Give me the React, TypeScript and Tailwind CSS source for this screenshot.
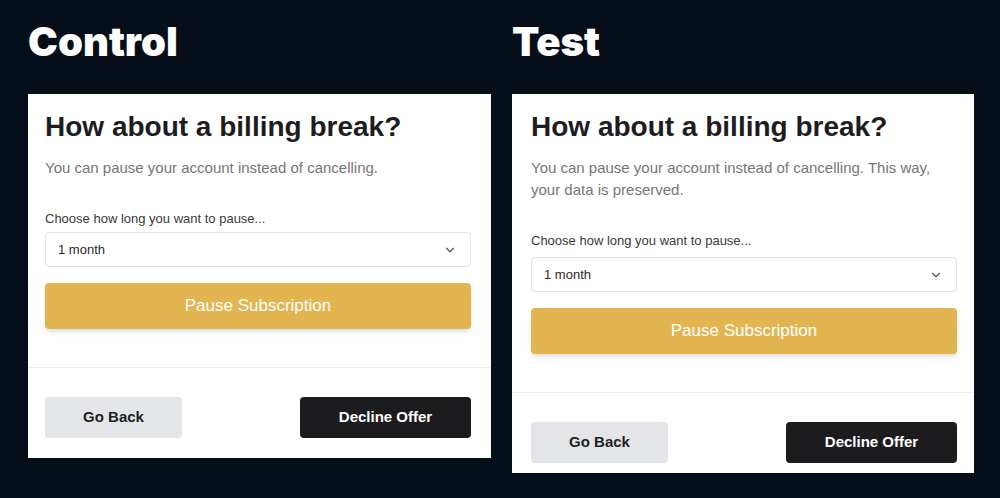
import { ChevronDown } from "lucide-react";

type OfferCardProps = {
  description: string;
  padX: string;
  padBottom: string;
  width: string;
  selectGap: string;
};

const OfferCard = ({ description, padX, padBottom, width, selectGap }: OfferCardProps) => {
  return (
    <div className={`bg-white ${width} ${padBottom} font-['Liberation_Sans',Arial,sans-serif]`}>
      <div className={`${padX} pt-[16px]`}>
        <h2 className="text-[28px] leading-[34px] font-bold text-[#1d1d1f]">How about a billing break?</h2>
        <p className="mt-[13px] text-[15px] leading-[22px] text-[#767676]">{description}</p>
        <label className="block mt-[31px] text-[13px] leading-[18px] text-[#3a3a3a]">
          Choose how long you want to pause...
        </label>
        <div className={`${selectGap} h-[35px] flex items-center justify-between rounded-[4px] border border-[#e2e2e2] pl-[12px] pr-[13px]`}>
          <span className="text-[13px] text-[#2a2a2a]">1 month</span>
          <ChevronDown size={14} strokeWidth={2} className="text-[#555]" />
        </div>
        <button className="mt-[16px] w-full h-[46px] rounded-[4px] bg-[#e3b551] text-white text-[17px] shadow-md">
          Pause Subscription
        </button>
      </div>
      <div className="mt-[38px] h-px bg-[#efefef]" />
      <div className={`${padX} mt-[29px] flex justify-between`}>
        <button className="w-[137px] h-[41px] rounded-[4px] bg-[#e4e5e9] text-[15px] font-bold text-[#1f1f1f]">
          Go Back
        </button>
        <button className="w-[171px] h-[41px] rounded-[4px] bg-[#1c1c1f] text-[15px] font-bold text-white">
          Decline Offer
        </button>
      </div>
    </div>
  );
};

export default function App() {
  return (
    <div className="w-[1000px] h-[498px] bg-[#060e1a] flex gap-[21px] pl-[28px] overflow-hidden">
      <div className="flex flex-col">
        <h1 className="pt-[22px] text-[40px] leading-[40px] font-black text-white font-['Inter',sans-serif]">Control</h1>
        <div className="mt-[32px]">
          <OfferCard
            width="w-[463px]"
            padX="pl-[17px] pr-[20px]"
            padBottom="pb-[20px]"
            selectGap="mt-[4px]"
            description="You can pause your account instead of cancelling."
          />
        </div>
      </div>
      <div className="flex flex-col">
        <h1 className="pt-[22px] text-[40px] leading-[40px] font-black text-white font-['Inter',sans-serif]">Test</h1>
        <div className="mt-[32px]">
          <OfferCard
            width="w-[462px]"
            padX="pl-[19px] pr-[17px]"
            padBottom="pb-[10px]"
            selectGap="mt-[7px]"
            description="You can pause your account instead of cancelling. This way, your data is preserved."
          />
        </div>
      </div>
    </div>
  );
}
